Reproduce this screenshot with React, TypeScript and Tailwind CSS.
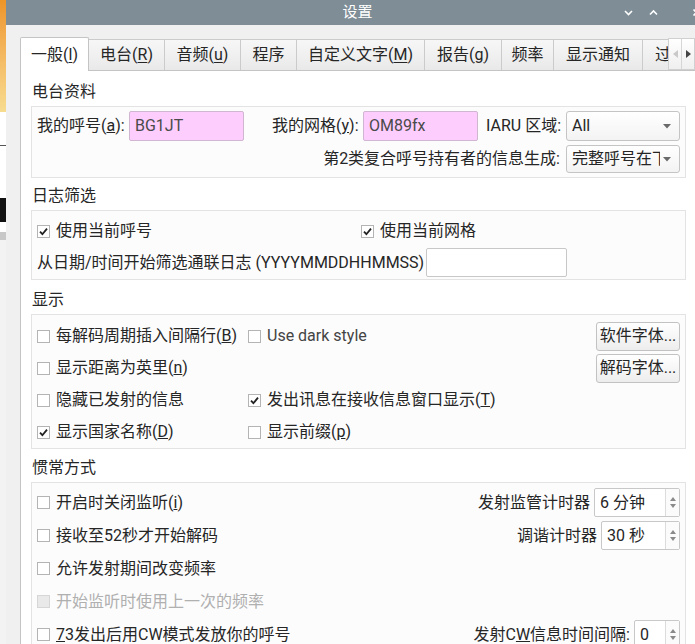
import React from "react";

function CheckBox({ checked = false, disabled = false }: { checked?: boolean; disabled?: boolean }) {
  return (
    <span
      className={`inline-flex w-[13px] h-[13px] shrink-0 items-center justify-center border ${
        disabled ? "border-[#d6d6d6] bg-[#e9e9e9]" : "border-[#b4b4b4] bg-white"
      }`}
    >
      {checked && (
        <svg width="11" height="11" viewBox="0 0 11 11">
          <path d="M2 5.6 L4.4 8.2 L9 2.6" fill="none" stroke="#222" strokeWidth="1.8" />
        </svg>
      )}
    </span>
  );
}

function CheckRow({
  checked,
  disabled,
  children,
}: {
  checked?: boolean;
  disabled?: boolean;
  children: React.ReactNode;
}) {
  return (
    <div className={`flex items-center gap-[6px] whitespace-nowrap ${disabled ? "text-[#b0b0b0]" : ""}`}>
      <CheckBox checked={checked} disabled={disabled} />
      <span>{children}</span>
    </div>
  );
}

function Combo({ text, w, h, tw }: { text: string; w: string; h: string; tw: string }) {
  return (
    <div
      className={`${w} ${h} flex items-center justify-between rounded-[3px] border border-[#c4c4c4] bg-gradient-to-b from-white to-[#f3f3f3] pl-[5px] pr-[8px] overflow-hidden`}
    >
      <span className={`${tw} whitespace-nowrap overflow-hidden`}>{text}</span>
      <svg width="8" height="5" viewBox="0 0 8 5" className="shrink-0">
        <path d="M0 0 L8 0 L4 4.5 Z" fill="#6a6a6a" />
      </svg>
    </div>
  );
}

function Spin({ text, w }: { text: string; w: string }) {
  return (
    <div className={`${w} h-[29px] flex items-stretch border border-[#c8c8c8] rounded-[2px] bg-white`}>
      <span className="flex-1 flex items-center pl-[5px] whitespace-nowrap">{text}</span>
      <div className="w-[14px] border-l border-[#dcdcdc] flex flex-col items-center justify-center gap-[3px] bg-[#fbfbfb]">
        <svg width="6" height="4" viewBox="0 0 6 4">
          <path d="M0 4 L3 0 L6 4 Z" fill="#8a8a8a" />
        </svg>
        <svg width="6" height="4" viewBox="0 0 6 4">
          <path d="M0 0 L3 4 L6 0 Z" fill="#8a8a8a" />
        </svg>
      </div>
    </div>
  );
}

function Btn({ children }: { children: React.ReactNode }) {
  return (
    <div className="w-[84px] h-[29px] flex items-center justify-center rounded-[3px] border border-[#c2c2c2] bg-gradient-to-b from-white to-[#ededed] whitespace-nowrap overflow-hidden">
      {children}
    </div>
  );
}

type Tab = { pre: string; key?: string; post?: string; w: string; active?: boolean };

const tabs: Tab[] = [
  { pre: "一般(", key: "l", post: ")", w: "w-[69px]", active: true },
  { pre: "电台(", key: "R", post: ")", w: "w-[76px]" },
  { pre: "音频(", key: "u", post: ")", w: "w-[76px]" },
  { pre: "程序", w: "w-[56px]" },
  { pre: "自定义文字(", key: "M", post: ")", w: "w-[128px]" },
  { pre: "报告(", key: "g", post: ")", w: "w-[77px]" },
  { pre: "频率", w: "w-[52px]" },
  { pre: "显示通知", w: "w-[89px]" },
  { pre: "过", w: "w-[44px]" },
];

export default function App() {
  return (
    <div className="w-[695px] h-[644px] overflow-hidden flex bg-white text-[16px] text-[#262626] font-['Roboto','Noto_Sans_CJK_SC',sans-serif]">
      {/* desktop strip behind the dialog */}
      <div className="w-[6px] shrink-0 flex flex-col bg-[#f7f7f7]">
        <div className="h-[112px] bg-gradient-to-b from-[#ee9526] to-[#f7dc8f]" />
        <div className="h-[33px] bg-white" />
        <div className="h-[1px] bg-[#555]" />
        <div className="h-[52px] bg-white" />
        <div className="h-[24px] bg-[#111]" />
        <div className="h-[10px] bg-white" />
        <div className="h-[8px] bg-[#c8c8c8]" />
        <div className="flex-1 bg-[#f3f3f3]" />
      </div>

      {/* dialog */}
      <div className="flex-1 flex flex-col min-w-0">
        {/* title bar */}
        <div className="h-[25px] shrink-0 bg-[#7e8d96] relative flex items-center justify-center text-white text-[15px]">
          <span className="ml-[14px]">设置</span>
          <div className="absolute right-[-6px] top-0 h-full flex items-center gap-[16px]">
            <svg width="9" height="9" viewBox="0 0 9 9">
              <path d="M1 3 L4.5 6.5 L8 3" fill="none" stroke="#fff" strokeWidth="1.6" />
            </svg>
            <svg width="9" height="9" viewBox="0 0 9 9">
              <path d="M1 6.5 L4.5 3 L8 6.5" fill="none" stroke="#fff" strokeWidth="1.6" />
            </svg>
            <svg width="9" height="9" viewBox="0 0 9 9" className="ml-[18px]">
              <path d="M1.5 1.5 L7.5 7.5 M7.5 1.5 L1.5 7.5" fill="none" stroke="#fff" strokeWidth="1.6" />
            </svg>
          </div>
        </div>

        {/* body */}
        <div className="flex-1 flex flex-col bg-[#f0f0f0] pl-[14px] pt-[12px] min-h-0">
          {/* tab bar */}
          <div className="relative h-[33px] shrink-0 flex items-end">
            {tabs.map((t, i) => (
              <div
                key={i}
                className={`${t.w} shrink-0 flex items-center whitespace-nowrap overflow-hidden ${
                  t.active
                    ? "relative z-10 h-[34px] -mb-[1px] bg-white border border-b-0 border-[#c4c4c4] rounded-t-[2px]"
                    : "h-[31px] border-t border-r border-[#cbcbcb] bg-gradient-to-b from-[#f7f7f7] to-[#e9e9e9]"
                } ${t.pre === "过" ? "justify-start pl-[12px]" : "justify-center"}`}
              >
                <span>
                  {t.pre}
                  {t.key && <u className="underline-offset-2">{t.key}</u>}
                  {t.post}
                </span>
              </div>
            ))}
            <div className="absolute right-0 top-[1px] h-[32px] w-[27px] flex z-20 border border-[#d0d0d0] bg-gradient-to-b from-white to-[#efefef]">
              <div className="flex-1 flex items-center justify-center border-r border-[#d6d6d6]">
                <svg width="5" height="8" viewBox="0 0 5 8">
                  <path d="M5 0 L0 4 L5 8 Z" fill="#c9c9c9" />
                </svg>
              </div>
              <div className="flex-1 flex items-center justify-center">
                <svg width="5" height="8" viewBox="0 0 5 8">
                  <path d="M0 0 L5 4 L0 8 Z" fill="#444" />
                </svg>
              </div>
            </div>
          </div>

          {/* pane */}
          <div className="flex-1 bg-white border-l border-t border-[#c4c4c4] pl-[10px] pr-[9px] flex flex-col">
            {/* 电台资料 */}
            <div className="h-[28px] mt-[7px] flex items-center pl-[1px]">电台资料</div>
            <div className="border border-[#e3e3e3] bg-[#fcfcfc] pt-[4px] pb-[4px] pl-[5px] pr-[5px] flex flex-col gap-[4px]">
              <div className="flex items-center h-[30px] whitespace-nowrap">
                <span className="w-[92px] shrink-0">
                  我的呼号(<u>a</u>):
                </span>
                <div className="w-[115px] h-[30px] shrink-0 bg-[#fdcdfd] border border-[#d0b6d0] rounded-[2px] pl-[5px] flex items-center text-[#4a4a4a]">
                  BG1JT
                </div>
                <span className="ml-[28px] w-[91px] shrink-0">
                  我的网格(<u>y</u>):
                </span>
                <div className="w-[115px] h-[30px] shrink-0 bg-[#fdcdfd] border border-[#d0b6d0] rounded-[2px] pl-[5px] flex items-center text-[#4a4a4a]">
                  OM89fx
                </div>
                <span className="ml-[8px] w-[80px] shrink-0">IARU 区域:</span>
                <Combo text="All" w="w-[114px]" h="h-[30px]" tw="flex-1" />
              </div>
              <div className="flex items-center justify-end h-[28px] whitespace-nowrap gap-[6px]">
                <span>第2类复合呼号持有者的信息生成:</span>
                <Combo text="完整呼号在下一行" w="w-[114px]" h="h-[28px]" tw="w-[88px]" />
              </div>
            </div>

            {/* 日志筛选 */}
            <div className="h-[28px] mt-[4px] flex items-center pl-[1px]">日志筛选</div>
            <div className="border border-[#e3e3e3] bg-[#fcfcfc] pt-[7px] pb-[2px] pl-[5px] pr-[5px] flex flex-col gap-[4px]">
              <div className="flex items-center h-[26px]">
                <div className="w-[324px] shrink-0">
                  <CheckRow checked>使用当前呼号</CheckRow>
                </div>
                <CheckRow checked>使用当前网格</CheckRow>
              </div>
              <div className="flex items-center h-[29px] whitespace-nowrap">
                <span className="w-[389px] shrink-0">从日期/时间开始筛选通联日志 (YYYYMMDDHHMMSS)</span>
                <div className="w-[141px] h-[29px] shrink-0 bg-white border border-[#c8c8c8] rounded-[2px]" />
              </div>
            </div>

            {/* 显示 */}
            <div className="h-[28px] mt-[6px] flex items-center pl-[1px]">显示</div>
            <div className="border border-[#e3e3e3] bg-[#fcfcfc] pt-[5px] pb-0 pl-[5px] pr-[5px] flex flex-col">
              <div className="flex items-center h-[32px]">
                <div className="w-[211px] shrink-0">
                  <CheckRow>
                    每解码周期插入间隔行(<u>B</u>)
                  </CheckRow>
                </div>
                <div className="flex-1">
                  <CheckRow>
                    <span className="text-[#444]">Use dark style</span>
                  </CheckRow>
                </div>
                <Btn>软件字体...</Btn>
              </div>
              <div className="flex items-center h-[32px]">
                <div className="w-[211px] shrink-0">
                  <CheckRow>
                    显示距离为英里(<u>n</u>)
                  </CheckRow>
                </div>
                <div className="flex-1" />
                <Btn>解码字体...</Btn>
              </div>
              <div className="flex items-center h-[32px]">
                <div className="w-[211px] shrink-0">
                  <CheckRow>隐藏已发射的信息</CheckRow>
                </div>
                <CheckRow checked>
                  发出讯息在接收信息窗口显示(<u>T</u>)
                </CheckRow>
              </div>
              <div className="flex items-center h-[32px]">
                <div className="w-[211px] shrink-0">
                  <CheckRow checked>
                    显示国家名称(<u>D</u>)
                  </CheckRow>
                </div>
                <CheckRow>
                  显示前缀(<u>p</u>)
                </CheckRow>
              </div>
            </div>

            {/* 惯常方式 */}
            <div className="h-[28px] mt-[5px] flex items-center pl-[1px]">惯常方式</div>
            <div className="border border-[#e3e3e3] bg-[#fcfcfc] pt-[3px] pl-[5px] pr-[5px] flex flex-col">
              <div className="flex items-center justify-between h-[33px]">
                <CheckRow>
                  开启时关闭监听(<u>i</u>)
                </CheckRow>
                <div className="flex items-center gap-[4px] whitespace-nowrap">
                  <span>发射监管计时器</span>
                  <Spin text="6 分钟" w="w-[86px]" />
                </div>
              </div>
              <div className="flex items-center justify-between h-[33px]">
                <CheckRow>接收至52秒才开始解码</CheckRow>
                <div className="flex items-center gap-[4px] whitespace-nowrap">
                  <span>调谐计时器</span>
                  <Spin text="30 秒" w="w-[79px]" />
                </div>
              </div>
              <div className="flex items-center h-[33px]">
                <CheckRow>允许发射期间改变频率</CheckRow>
              </div>
              <div className="flex items-center h-[33px]">
                <CheckRow disabled>开始监听时使用上一次的频率</CheckRow>
              </div>
              <div className="flex items-center justify-between h-[33px]">
                <CheckRow>
                  <u>7</u>3发出后用CW模式发放你的呼号
                </CheckRow>
                <div className="flex items-center gap-[4px] whitespace-nowrap">
                  <span>
                    发射C<u>W</u>信息时间间隔:
                  </span>
                  <Spin text="0" w="w-[46px]" />
                </div>
              </div>
            </div>
          </div>
        </div>
      </div>
    </div>
  );
}
